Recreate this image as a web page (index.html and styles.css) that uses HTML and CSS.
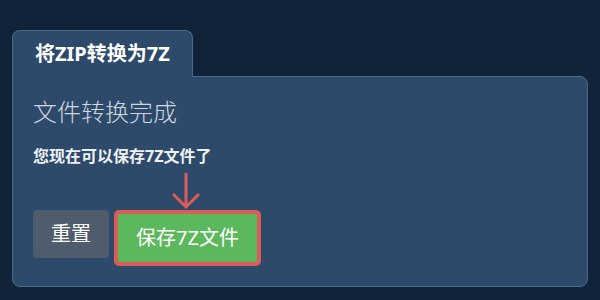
FILE: index.html
```html
<!DOCTYPE html>
<html lang="zh-CN">
<head>
    <meta charset="UTF-8">
    <meta name="viewport" content="width=device-width, initial-scale=1.0">
    <title>将ZIP转换为7Z</title>
    <link rel="stylesheet" href="styles.css">
</head>
<body>
    <div class="converter">
        <div class="tab">将ZIP转换为7Z</div>
        <div class="panel">
            <h2 class="status">文件转换完成</h2>
            <p class="hint">您现在可以保存7Z文件了</p>
            <div class="actions">
                <button class="btn btn-reset">重置</button>
                <div class="save-wrap">
                    <svg class="arrow" width="30" height="38" viewBox="0 0 30 38">
                        <path d="M15 1 V35 M2 22 L15 35 L28 22" fill="none" stroke="#dc5c5a" stroke-width="3"/>
                    </svg>
                    <button class="btn btn-save">保存7Z文件</button>
                </div>
            </div>
        </div>
    </div>
</body>
</html>
```

FILE: styles.css
```css
* {
    margin: 0;
    padding: 0;
    box-sizing: border-box;
}

body {
    background-color: #112339;
    font-family: "Noto Sans", "Noto Sans CJK SC", sans-serif;
    padding: 30px 12px 0;
}

.tab {
    display: inline-block;
    position: relative;
    z-index: 1;
    margin-bottom: -1px;
    padding: 0 22px;
    height: 47px;
    line-height: 46px;
    background: #2d4a6a;
    border: 1px solid #4c6a8c;
    border-bottom: none;
    border-radius: 8px 8px 0 0;
    color: #ffffff;
    font-size: 20px;
    font-weight: bold;
}

.panel {
    background: #2d4a6a;
    border: 1px solid #4c6a8c;
    border-radius: 0 8px 8px 8px;
    padding: 20px;
}

.status {
    color: #cfd7e0;
    font-size: 24px;
    font-weight: 300;
    line-height: 30px;
}

.hint {
    margin-top: 18px;
    color: #eef1f4;
    font-size: 16px;
    font-weight: bold;
    line-height: 22px;
}

.actions {
    display: flex;
    align-items: flex-start;
    gap: 5px;
    margin-top: 43px;
}

.btn {
    font-family: "Noto Sans", "Noto Sans CJK SC", sans-serif;
    font-size: 20px;
    line-height: 24px;
    padding: 12px 18px;
    border: none;
    border-radius: 4px;
    color: #ffffff;
    cursor: pointer;
}

.btn-reset {
    background: #4e5c6b;
}

.save-wrap {
    position: relative;
}

.btn-save {
    background: #5cb85c;
    border: 4px solid #dc5c5a;
    border-radius: 5px;
}

.arrow {
    position: absolute;
    left: 50%;
    top: -38px;
    margin-left: -16px;
}
```
